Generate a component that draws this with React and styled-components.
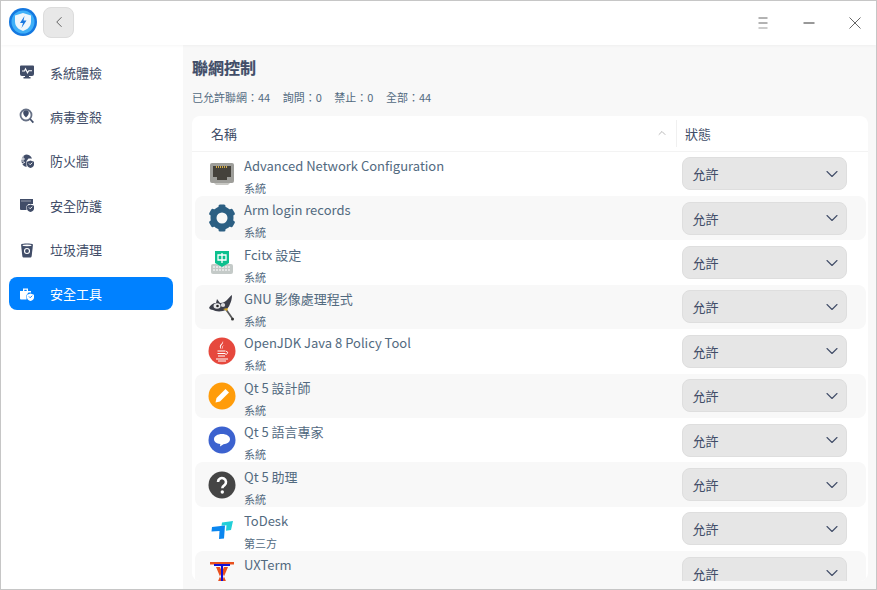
import React from 'react'
import styled, { createGlobalStyle } from 'styled-components'
import { ChevronDown, ChevronUp, ChevronLeft } from 'lucide-react'

const GlobalStyle = createGlobalStyle`
    html, body {
        margin: 0;
        padding: 0;
        background: #fff;
        font-family: "Noto Sans CJK TC", "Noto Sans", sans-serif;
    }
`

const Window = styled.div`
    box-sizing: border-box;
    width: 877px;
    height: 590px;
    border: 1px solid #c6c6c6;
    display: flex;
    flex-direction: column;
    overflow: hidden;
    background: #fff;
`

const TitleBar = styled.header`
    flex: 0 0 44px;
    box-sizing: border-box;
    display: flex;
    align-items: center;
    padding: 0 0 2px 8px;
    background: #fff;
    box-shadow: 0 1px 3px rgba(0, 0, 0, 0.04);
    z-index: 1;
`

const Logo = styled.svg`
    width: 28px;
    height: 28px;
    margin-right: 6px;
`

const BackButton = styled.button`
    width: 31px;
    height: 31px;
    padding: 0;
    border: 1px solid #dcdcdc;
    border-radius: 8px;
    background: #e8e8e8;
    display: flex;
    align-items: center;
    justify-content: center;
    color: #555;
`

const WindowControls = styled.div`
    margin-left: auto;
    margin-right: -1.5px;
    padding: 2px 0 0;
    display: flex;
    align-items: center;
`

const ControlButton = styled.div`
    width: 46px;
    height: 40px;
    display: flex;
    align-items: center;
    justify-content: center;
`

const Body = styled.div`
    flex: 1;
    min-height: 0;
    display: flex;
`

const Sidebar = styled.nav`
    flex: 0 0 182px;
    box-sizing: border-box;
    padding: 10.5px 10px 0 8px;
    display: flex;
    flex-direction: column;
    gap: 11.4px;
    background: #fff;
`

const NavItem = styled.div`
    height: 33px;
    border-radius: 8px;
    display: flex;
    align-items: center;
    padding-left: 10px;
    font-size: 13px;
    color: ${({ $active }) => ($active ? '#fff' : '#414d68')};
    background: ${({ $active }) => ($active ? '#0081ff' : 'transparent')};
`

const NavIcon = styled.svg`
    width: 16px;
    height: 16px;
    margin-right: 15px;
    flex: none;
`

const Content = styled.main`
    flex: 1;
    min-width: 0;
    display: flex;
    flex-direction: column;
    padding: 10px 8px 8px 9px;
    background: #f8f8f8;
`

const Title = styled.h1`
    margin: 0;
    font-size: 16px;
    line-height: 24px;
    font-weight: 700;
    color: #414d68;
    -webkit-text-stroke: 0.2px #414d68;
`

const Stats = styled.div`
    margin-top: 9px;
    display: flex;
    gap: 12.5px;
    font-size: 11px;
    line-height: 18px;
    color: #526a7f;
`

const Card = styled.section`
    margin-top: 10px;
    flex: 1;
    min-height: 0;
    overflow: hidden;
    border-radius: 8px;
    background: #fff;
`

const HeaderRow = styled.div`
    box-sizing: border-box;
    height: 35.6px;
    display: grid;
    grid-template-columns: 485px 1fr;
    align-items: center;
    border-bottom: 1px solid #f3f3f3;
    font-size: 13px;
    color: #414d68;
`

const NameHeader = styled.div`
    display: flex;
    align-items: center;
    justify-content: space-between;
    height: 27px;
    padding: 0 8px 0 19px;
    border-right: 1px solid #f0f0f0;
`

const StatusHeader = styled.div`
    padding-left: 8px;
`

const Rows = styled.div`
    display: grid;
    grid-auto-rows: 44.4px;
`

const Row = styled.div`
    margin: 0 2px 0 3px;
    display: grid;
    grid-template-columns: 49px 437.5px 165.5px;
    align-items: center;
    border-radius: 8px;
    background: ${({ $odd }) => ($odd ? '#f8f8f8' : 'transparent')};
`

const IconSlot = styled.div`
    display: flex;
    justify-content: center;
    padding-left: 4px;
    box-sizing: border-box;
`

const AppIcon = styled.svg`
    width: 28px;
    height: 28px;
`

const AppText = styled.div`
    display: flex;
    flex-direction: column;
    height: 44px;
`

const AppName = styled.div`
    font-size: 13px;
    line-height: 20px;
    height: 20px;
    margin-top: 4px;
    color: #526a7f;
`

const AppKind = styled.div`
    font-size: 11px;
    line-height: 18px;
    margin-top: 3px;
    color: #526a7f;
`

const Select = styled.div`
    box-sizing: border-box;
    height: 33px;
    display: flex;
    align-items: center;
    justify-content: space-between;
    padding: 0 4px 0 10px;
    border: 1px solid #dedede;
    border-radius: 8px;
    background: #e6e6e6;
    font-size: 13px;
    color: #414d68;
`

const shieldPath = 'M11.500 7.500l3.500 1.200v2.800c0 1.800-1.500 3-3.500 3.500-2-.5-3.500-1.700-3.500-3.500V8.700z'

const navIcons = {
    check: (c) => (
        <g fill={c}>
            <path d="M1 2.500a1 1 0 0 1 1-1h12a1 1 0 0 1 1 1V10a2 2 0 0 1-2 2H10v1h1.500v1.500h-7V13H6v-1H3a2 2 0 0 1-2-2z" />
            <path d="M3 7h2.500l1-2.200 2 4 1.200-2H13" fill="none" stroke="#fff" strokeWidth="1.100" />
        </g>
    ),
    virus: (c) => (
        <g fill={c}>
            <circle cx="7" cy="7" r="5.500" fill="none" stroke={c} strokeWidth="1.800" opacity=".8" />
            <path d="M4.200 5a2.800 2.800 0 0 1 5.600 0c0 2-1.600 3.200-2.800 4.500C5.800 8.200 4.200 7 4.200 5z" />
            <path d="M10.500 11.500l1.200-1 3.300 3.500-1.300 1.200z" />
        </g>
    ),
    firewall: (c) => (
        <g fill={c}>
            <path d="M7 1.500a6.500 6.500 0 0 1 6 4H9.500L7.500 8v6A6.500 6.500 0 0 1 7 1.500z" />
            <path d={shieldPath} />
            <path d="M2 6h4M4 3v6M3 11l3-2" stroke="#fff" strokeWidth=".9" fill="none" />
            <path d="M10 10.500l1.200 1.200 2-2" stroke="#fff" strokeWidth="1" fill="none" />
        </g>
    ),
    protect: (c) => (
        <g fill={c}>
            <path d="M1 2h13v5h-4.500L7.500 9v4H2a1 1 0 0 1-1-1z" />
            <path d="M2.500 4h10" stroke="#fff" strokeWidth=".9" strokeDasharray="1 1" fill="none" />
            <path d={shieldPath} />
            <path d="M10 10.500l1.200 1.200 2-2" stroke="#fff" strokeWidth="1" fill="none" />
        </g>
    ),
    trash: (c) => (
        <g fill={c}>
            <path d="M2 2.500C2 1 14 1 14 2.500L12.700 14c-.2 1-.8 1.500-1.500 1.500H4.800c-.7 0-1.300-.5-1.500-1.500z" />
            <ellipse cx="8" cy="3.300" rx="4.500" ry=".9" fill="#fff" />
            <circle cx="8" cy="9" r="2.500" fill="none" stroke="#fff" strokeWidth="1.100" />
        </g>
    ),
    tools: (c) => (
        <g fill={c}>
            <path d="M1 5h3V2.500h5V5h3v1.500H9.500L7.500 9v4.500H2a1 1 0 0 1-1-1zM5.300 3.700V5h2.400V3.700z" />
            <path d={shieldPath} />
            <path d="M10 10.500l1.200 1.200 2-2" stroke="#0081ff" strokeWidth="1" fill="none" />
        </g>
    ),
}

const nav = [
    { label: '系統體檢', icon: 'check' },
    { label: '病毒查殺', icon: 'virus' },
    { label: '防火牆', icon: 'firewall' },
    { label: '安全防護', icon: 'protect' },
    { label: '垃圾清理', icon: 'trash' },
    { label: '安全工具', icon: 'tools', active: true },
]

const appIcons = {
    network: (
        <>
            <rect x="2" y="3" width="24" height="20" rx="2" fill="#9e9e9a" />
            <path d="M5 6h18v11h-4v3H9v-3H5z" fill="#45423c" />
            <path d="M8 7h12" stroke="#d8b04a" strokeWidth="2" strokeDasharray="1 1" />
            <path d="M6 23h16l-2 2H8z" fill="#c8c8c4" />
        </>
    ),
    gear: (
        <g fill="#2c5f83">
            <circle cx="14" cy="14" r="8.500" fill="none" stroke="#2c5f83" strokeWidth="6" />
            {[0, 60, 120, 180, 240, 300].map((deg) => (
                <rect key={deg} x="10.500" y="0.500" width="7" height="6" rx="1.500" transform={`rotate(${deg} 14 14)`} />
            ))}
        </g>
    ),
    fcitx: (
        <>
            <rect x="3" y="15" width="22" height="10" rx="2" fill="#c4cac8" />
            <path d="M5 18h18M5 21h18" stroke="#eef0ef" strokeWidth="1.500" strokeDasharray="2 1" />
            <path d="M7 2h14v12l-7 4-7-4z" fill="#0cc08e" />
            <path d="M10 6h8v5h-8zM14 4v10" fill="none" stroke="#fff" strokeWidth="1.300" />
        </>
    ),
    gimp: (
        <>
            <path d="M1 15c1-3 4-5 7-5l1-4 3 4c3 0 5-1 7-3 2-2 3-4 5-5 0 4-1 7-2 9-1 3-3 6-7 7-5 1-8 0-10-1-2 0-3-1-4-2z" fill="#3d3f4a" />
            <ellipse cx="9" cy="13" rx="3.500" ry="2.800" fill="#e8e8ea" />
            <circle cx="9.500" cy="13" r="1.300" fill="#222" />
            <ellipse cx="15" cy="12" rx="2.200" ry="2" fill="#dcdce0" />
            <path d="M17 15l7 10" stroke="#5a5a5a" strokeWidth="1.800" />
            <path d="M15 16l5-1-1 3z" fill="#d7a92e" />
            <circle cx="24.500" cy="26" r="1.500" fill="#333" />
        </>
    ),
    java: (
        <>
            <circle cx="14" cy="14" r="13.500" fill="#e6483d" />
            <path d="M15 4c1 3-3 4-2 7 .3 1 1 1.500 1 1.500-2-1-2.500-2.500-2-4 .5-1.500 3-2.500 3-4.500zM16.500 8c-2 1-2 2.500-1.300 4-1-.6-1.400-2-.6-3 .4-.5 1-.8 1.900-1z" fill="#fff" />
            <path d="M9.500 14h8M9.500 16.500h8M10 19h7" stroke="#fff" strokeWidth="1.200" />
            <path d="M18 14.500c2-.5 2.500 2.500-.5 3" stroke="#fff" strokeWidth="1" fill="none" />
            <path d="M8 22h12M10 24h8" stroke="#fff" strokeWidth="1" />
        </>
    ),
    designer: (
        <>
            <circle cx="14" cy="14" r="13.500" fill="#ff9c0a" />
            <path d="M7.500 20.500l1-4.500L17.500 7l3.500 3.500-9 9z" fill="#fff" />
        </>
    ),
    linguist: (
        <>
            <circle cx="14" cy="14" r="13.500" fill="#3c62cf" />
            <path d="M14 8c4.500 0 8 2.200 8 5.200 0 2.800-3 4.800-6.500 5L12 20.500l.3-2.500C8.500 17.500 6 15.800 6 13.200 6 10.200 9.500 8 14 8z" fill="#fff" />
        </>
    ),
    assistant: (
        <>
            <circle cx="14" cy="14" r="13.500" fill="#454545" />
            <path d="M10 11a4 4 0 1 1 6.500 3.200c-1.500 1-2.200 1.500-2.200 3" fill="none" stroke="#fff" strokeWidth="2.600" />
            <circle cx="14.300" cy="21" r="1.700" fill="#fff" />
        </>
    ),
    todesk: (
        <>
            <path d="M14 7.500l11-1.500-2 9-5 .8.500-5.500-5 .5z" fill="#22cfd8" />
            <path d="M4 12l13-1.500-1 13-5 .5.500-8-8 .5z" fill="#0a86ef" />
        </>
    ),
    uxterm: (
        <>
            <path d="M2 3h24v2.500H18L14 8l-4-2.500H2z" fill="#e8501e" />
            <path d="M8 27L16 8h4l-8 19zM20 27L12 8H8l8 19z" fill="#e8501e" />
            <path d="M6 5h16v2h-7v20h-2V7H6z" fill="#1010d8" />
        </>
    ),
}

const apps = [
    { name: 'Advanced Network Configuration', kind: '系統', icon: 'network' },
    { name: 'Arm login records', kind: '系統', icon: 'gear' },
    { name: 'Fcitx 設定', kind: '系統', icon: 'fcitx' },
    { name: 'GNU 影像處理程式', kind: '系統', icon: 'gimp' },
    { name: 'OpenJDK Java 8 Policy Tool', kind: '系統', icon: 'java' },
    { name: 'Qt 5 設計師', kind: '系統', icon: 'designer' },
    { name: 'Qt 5 語言專家', kind: '系統', icon: 'linguist' },
    { name: 'Qt 5 助理', kind: '系統', icon: 'assistant' },
    { name: 'ToDesk', kind: '第三方', icon: 'todesk' },
    { name: 'UXTerm', kind: '系統', icon: 'uxterm' },
]

export default function App() {
    return (
        <Window>
            <GlobalStyle />
            <TitleBar>
                <Logo viewBox="0 0 28 28">
                    <circle cx="14" cy="14" r="14" fill="#1478e0" />
                    <circle cx="14" cy="14" r="11.500" fill="#3fb0f8" />
                    <path d="M14 5l8 2.500v6c0 5-3.500 8-8 9.500-4.500-1.500-8-4.500-8-9.500v-6z" fill="#eef6fc" />
                    <path d="M15.500 8l-4.500 7h3l-1.500 5 5-7.500h-3z" fill="#1877e0" />
                </Logo>
                <BackButton>
                    <ChevronLeft size={18} strokeWidth={1.2} />
                </BackButton>
                <WindowControls>
                    <ControlButton>
                        <svg width="12" height="12" viewBox="0 0 12 12">
                            <path d="M1.500 1h9M1.500 6h9" stroke="#666" strokeWidth="1" />
                            <path d="M1.500 11h9" stroke="#999" strokeWidth="1" />
                        </svg>
                    </ControlButton>
                    <ControlButton>
                        <svg width="12" height="12" viewBox="0 0 12 12">
                            <path d="M.5 6h11" stroke="#333" strokeWidth="1" />
                        </svg>
                    </ControlButton>
                    <ControlButton>
                        <svg width="12" height="12" viewBox="0 0 12 12">
                            <path d="M.5.500l11 11M11.500.500l-11 11" stroke="#555" strokeWidth=".9" />
                        </svg>
                    </ControlButton>
                </WindowControls>
            </TitleBar>
            <Body>
                <Sidebar>
                    {nav.map((item) => (
                        <NavItem key={item.label} $active={item.active}>
                            <NavIcon viewBox="0 0 16 16">
                                {navIcons[item.icon](item.active ? '#fff' : '#414d68')}
                            </NavIcon>
                            {item.label}
                        </NavItem>
                    ))}
                </Sidebar>
                <Content>
                    <Title>聯網控制</Title>
                    <Stats>
                        <span>已允許聯網：44</span>
                        <span>詢問：0</span>
                        <span>禁止：0</span>
                        <span>全部：44</span>
                    </Stats>
                    <Card>
                        <HeaderRow>
                            <NameHeader>
                                名稱
                                <ChevronUp size={12} strokeWidth={1.2} color="#8a8a8a" />
                            </NameHeader>
                            <StatusHeader>狀態</StatusHeader>
                        </HeaderRow>
                        <Rows>
                            {apps.map((app, i) => (
                                <Row key={app.name} $odd={i % 2 === 1}>
                                    <IconSlot>
                                        <AppIcon viewBox="0 0 28 28">{appIcons[app.icon]}</AppIcon>
                                    </IconSlot>
                                    <AppText>
                                        <AppName>{app.name}</AppName>
                                        <AppKind>{app.kind}</AppKind>
                                    </AppText>
                                    <Select>
                                        允許
                                        <ChevronDown size={20} strokeWidth={1.3} color="#414d68" />
                                    </Select>
                                </Row>
                            ))}
                        </Rows>
                    </Card>
                </Content>
            </Body>
        </Window>
    )
}
